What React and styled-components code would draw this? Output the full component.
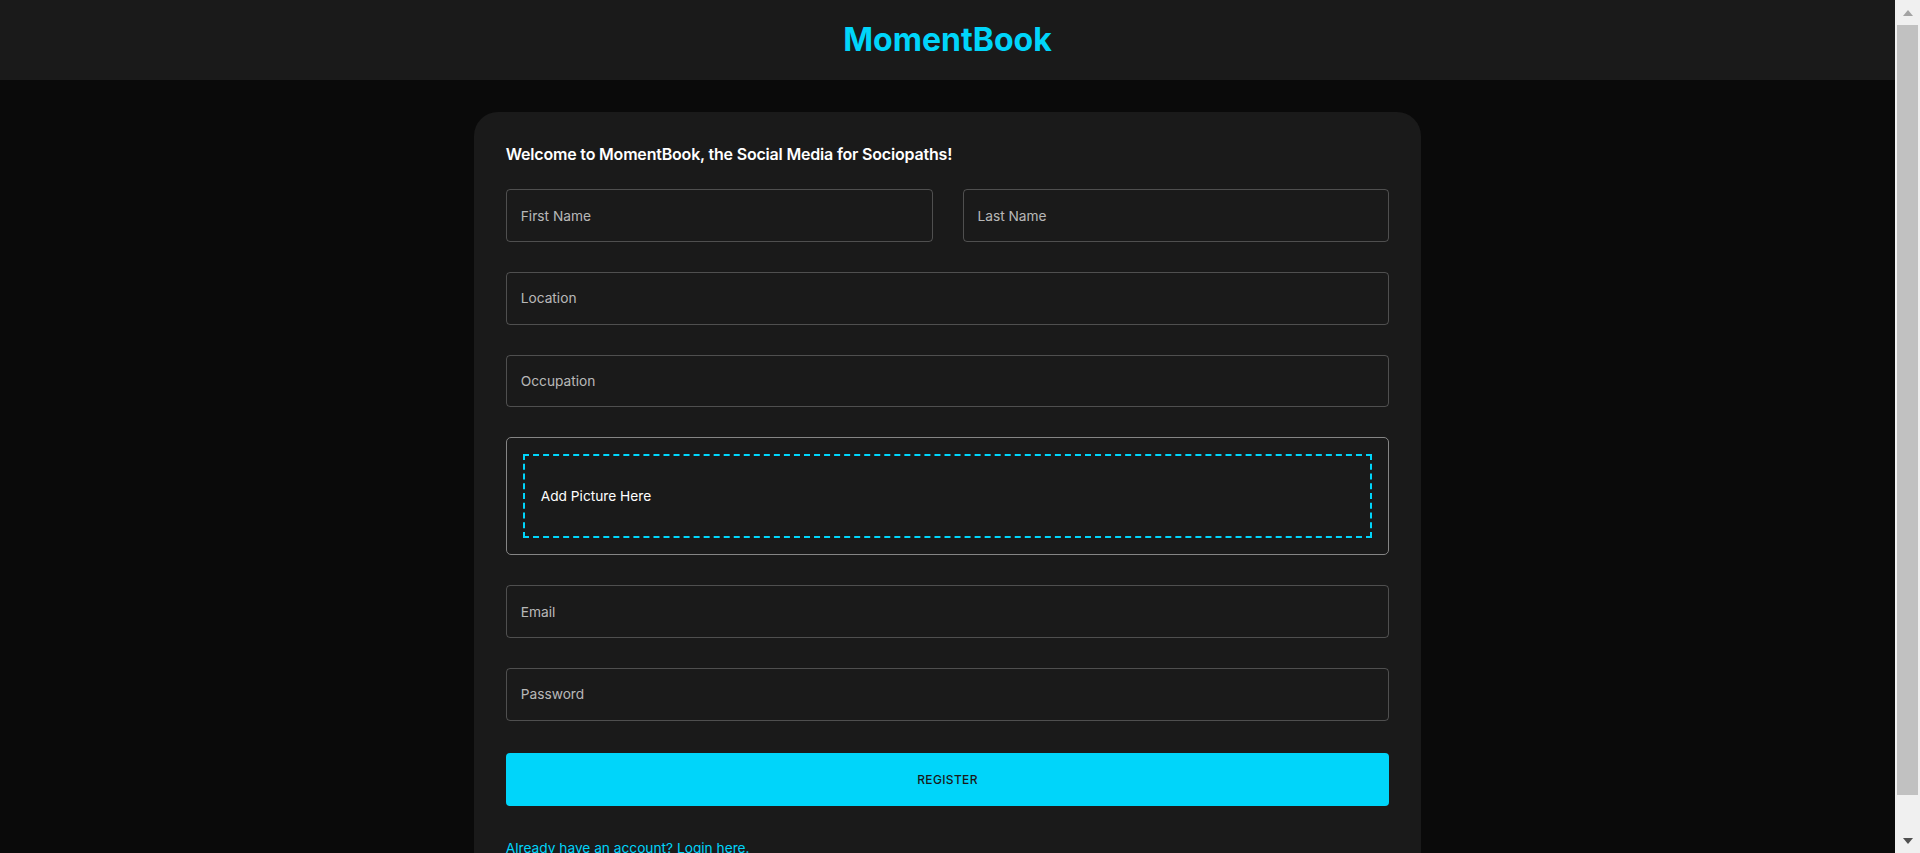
import React from 'react';
import styled, { createGlobalStyle } from 'styled-components';

const GlobalStyle = createGlobalStyle`
  html, body {
    margin: 0;
    height: 100%;
    overflow: hidden;
    background: #0a0a0a;
  }
  body {
    color: #fff;
    font-family: Inter, "Noto Sans", "Liberation Sans", sans-serif;
    font-size: 13.714px;
    line-height: 1.5;
  }
  #root {
    height: 100%;
  }
`;

const Frame = styled.div`
  display: flex;
  height: 100vh;
`;

const Page = styled.div`
  flex: 1;
  min-width: 0;
  overflow-y: auto;
  scrollbar-width: none;
  background: #0a0a0a;
`;

// fake classic scrollbar, the reference shows a 25px one
const ScrollRail = styled.aside`
  width: 25px;
  flex-shrink: 0;
  display: flex;
  flex-direction: column;
  align-items: center;
  background: #f0f0f0;
`;

const Arrow = styled.div`
  width: 0;
  height: 0;
  margin: ${(p) => (p.$down ? '10px 0 9px' : '10px 0 9px')};
  border-left: 5.5px solid transparent;
  border-right: 5.5px solid transparent;
  ${(p) =>
    p.$down
      ? 'border-top: 6px solid #505050;'
      : 'border-bottom: 6px solid #a3a3a3;'}
`;

const Thumb = styled.div`
  align-self: stretch;
  margin: 0 2px;
  height: 770px;
  background: #c1c1c1;
`;

const Spacer = styled.div`
  flex: 1;
`;

const Header = styled.header`
  background: #1a1a1a;
  padding: 16px 6%;
  text-align: center;
`;

const Logo = styled.h1`
  margin: 0;
  font-size: 32px;
  font-weight: 700;
  line-height: 1.5;
  color: #00d5fa;
`;

const Card = styled.main`
  width: 50%;
  margin: 32px auto;
  padding: 32px;
  box-sizing: border-box;
  border-radius: 24px;
  background: #1a1a1a;
`;

const Title = styled.h5`
  margin: 0 0 24px;
  font-size: 16px;
  font-weight: 600;
  line-height: 1.334;
  letter-spacing: -0.012em;
  color: #fff;
`;

const FormGrid = styled.div`
  display: grid;
  grid-template-columns: repeat(4, minmax(0, 1fr));
  gap: 30px;
`;

const Field = styled.input`
  grid-column: span ${(p) => p.$span || 4};
  box-sizing: border-box;
  width: 100%;
  min-width: 0;
  height: 52.7px;
  padding: 0 14px;
  border: 1px solid rgba(255, 255, 255, 0.23);
  border-radius: 4px;
  background: transparent;
  color: #fff;
  font-family: inherit;
  font-size: 13.714px;
  outline: none;

  &::placeholder {
    color: rgba(255, 255, 255, 0.7);
  }
`;

const Dropzone = styled.div`
  grid-column: span 4;
  border: 1px solid #858585;
  border-radius: 5px;
  padding: 16px;
`;

const DropInner = styled.div`
  border: 2px dashed #00d5fa;
  padding: 0 16px;
  cursor: pointer;
  p {
    margin: 29.7px 0;
    line-height: 20.6px;
  }
`;

const SubmitButton = styled.button`
  display: block;
  width: 100%;
  margin: 32px 0;
  padding: 16px;
  border: none;
  border-radius: 4px;
  background: #00d5fa;
  color: #1a1a1a;
  font-family: inherit;
  font-size: 12px;
  font-weight: 500;
  line-height: 1.75;
  letter-spacing: 0.02857em;
  text-transform: uppercase;
  cursor: pointer;
`;

const LoginLink = styled.p`
  margin: 0;
  color: #00d5fa;
  text-decoration: underline;
  cursor: pointer;
`;

export default function App() {
  return (
    <Frame>
      <GlobalStyle />
      <Page>
        <Header>
          <Logo>MomentBook</Logo>
        </Header>
        <Card>
          <Title>Welcome to MomentBook, the Social Media for Sociopaths!</Title>
          <form onSubmit={(e) => e.preventDefault()}>
            <FormGrid>
              <Field $span={2} placeholder="First Name" />
              <Field $span={2} placeholder="Last Name" />
              <Field placeholder="Location" />
              <Field placeholder="Occupation" />
              <Dropzone>
                <DropInner>
                  <p>Add Picture Here</p>
                </DropInner>
              </Dropzone>
              <Field placeholder="Email" />
              <Field type="password" placeholder="Password" />
            </FormGrid>
            <SubmitButton type="submit">Register</SubmitButton>
            <LoginLink>Already have an account? Login here.</LoginLink>
          </form>
        </Card>
      </Page>
      <ScrollRail>
        <Arrow />
        <Thumb />
        <Spacer />
        <Arrow $down />
      </ScrollRail>
    </Frame>
  );
}
